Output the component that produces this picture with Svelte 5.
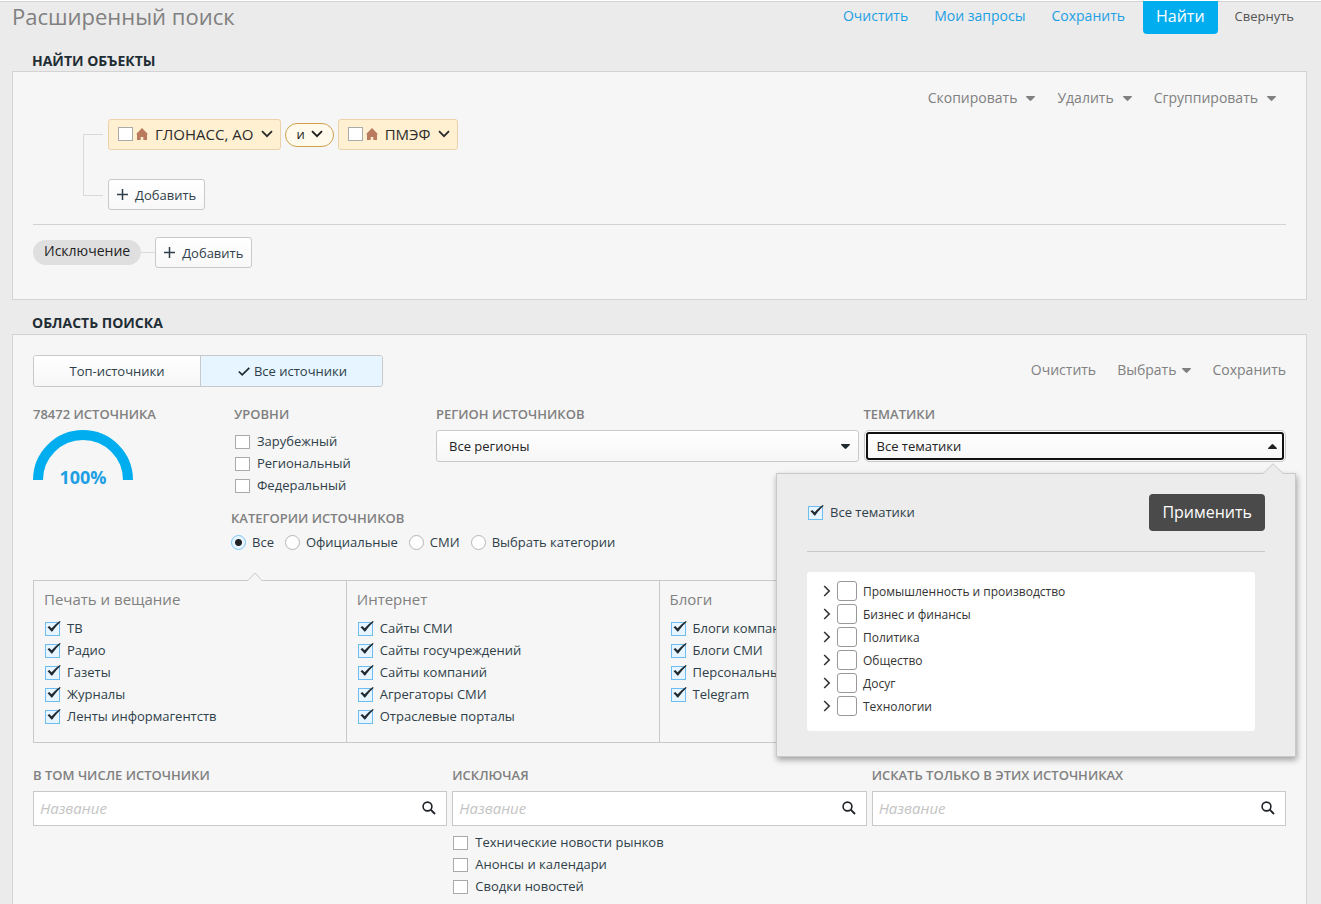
<script>
  const levels = ['Зарубежный', 'Региональный', 'Федеральный'];
  const categories = ['Все', 'Официальные', 'СМИ', 'Выбрать категории'];
  const groups = [
    { title: 'Печать и вещание', items: ['ТВ', 'Радио', 'Газеты', 'Журналы', 'Ленты информагентств'] },
    { title: 'Интернет', items: ['Сайты СМИ', 'Сайты госучреждений', 'Сайты компаний', 'Агрегаторы СМИ', 'Отраслевые порталы'] },
    { title: 'Блоги', items: ['Блоги компаний', 'Блоги СМИ', 'Персональные блоги', 'Telegram'] }
  ];
  const topics = ['Промышленность и производство', 'Бизнес и финансы', 'Политика', 'Общество', 'Досуг', 'Технологии'];
  const sourceFields = [
    { id: 'include', title: 'В том числе источники', options: [] },
    { id: 'exclude', title: 'Исключая', options: ['Технические новости рынков', 'Анонсы и календари', 'Сводки новостей'] },
    { id: 'only', title: 'Искать только в этих источниках', options: [] }
  ];

  let category = $state('Все');
  let topicsOpen = $state(true);
</script>

{#snippet caret()}
  <svg class="caret" width="9" height="5" viewBox="0 0 9 5" aria-hidden="true"><path d="M.6 0h7.800q.9.200.4.900L5.300 4.600q-.8.700-1.600 0L.2.900Q-.3.200.6 0z" fill="currentColor" /></svg>
{/snippet}

{#snippet chevron()}
  <svg class="chevron" width="12" height="8" viewBox="0 0 12 8" aria-hidden="true"><path d="M1 1.200l5 5 5-5" fill="none" stroke="currentColor" stroke-width="1.800" /></svg>
{/snippet}

{#snippet plus()}
  <svg width="11" height="11" viewBox="0 0 11 11" aria-hidden="true"><path d="M5.500 0v11M0 5.500h11" stroke="currentColor" stroke-width="1.500" /></svg>
{/snippet}

{#snippet checkItem(text, checked)}
  <label class="check">
    <span class="box">
      <input type="checkbox" {checked} />
      <svg class="tick" width="14" height="12" viewBox="0 0 14 12" aria-hidden="true"><path d="M.5 6.200l1.800-1.300 2.300 2.400Q8.500 2.800 12.800 0l.9.700Q9 5 5.200 10.500H4.300Q2.600 8 .5 6.200z" fill="#222a30" /></svg>
    </span>
    <span>{text}</span>
  </label>
{/snippet}

{#snippet chip(text)}
  <div class="chip">
    <input type="checkbox" aria-label={text} />
    <svg width="12" height="12" viewBox="0 0 12 12" aria-hidden="true"><path d="M6 0l6 6.200h-1V12H7.300V9H4.700v3H1V6.200H0z" fill="#b97a5e" /></svg>
    <button type="button">{text}{@render chevron()}</button>
  </div>
{/snippet}

<main class="page">
  <header class="header">
    <h1>Расширенный поиск</h1>
    <nav class="actions">
      <a href="#clear">Очистить</a>
      <a href="#queries">Мои запросы</a>
      <a href="#save">Сохранить</a>
      <button class="find" type="button">Найти</button>
      <button class="collapse" type="button">Свернуть</button>
    </nav>
  </header>

  <h2>Найти объекты</h2>
  <section class="panel objects">
    <div class="toolbar">
      <button type="button">Скопировать{@render caret()}</button>
      <button type="button">Удалить{@render caret()}</button>
      <button type="button">Сгруппировать{@render caret()}</button>
    </div>
    <div class="tree">
      <div class="bracket"></div>
      <div class="branches">
        <div class="chips">
          {@render chip('ГЛОНАСС, АО')}
          <button class="operator" type="button">и{@render chevron()}</button>
          {@render chip('ПМЭФ')}
        </div>
        <button class="add" type="button">{@render plus()}Добавить</button>
      </div>
    </div>
    <div class="exclusion">
      <span class="tag">Исключение</span>
      <span class="link"></span>
      <button class="add" type="button">{@render plus()}Добавить</button>
    </div>
  </section>

  <h2 class="second">Область поиска</h2>
  <section class="panel scope">
    <div class="scope-head">
      <div class="toggle">
        <button type="button">Топ-источники</button>
        <button type="button" class="active">
          <svg width="12" height="9" viewBox="0 0 12 9" aria-hidden="true"><path d="M.8 4.500l3.400 3.300L11.300.8" fill="none" stroke="#1f2a30" stroke-width="1.700" /></svg>Все источники
        </button>
      </div>
      <div class="toolbar compact">
        <button type="button">Очистить</button>
        <button type="button">Выбрать{@render caret()}</button>
        <button type="button">Сохранить</button>
      </div>
    </div>

    <div class="filters">
      <div>
        <h3>78472 источника</h3>
        <svg class="gauge" width="100" height="64" viewBox="0 0 100 64" role="img" aria-label="100%">
          <path d="M5 50a45 45 0 0 1 90 0" fill="none" stroke="#00adef" stroke-width="10" />
          <text x="50" y="54" text-anchor="middle">100%</text>
        </svg>
      </div>
      <div>
        <h3>Уровни</h3>
        <div class="levels">
          {#each levels as level}{@render checkItem(level, false)}{/each}
        </div>
      </div>
      <div class="field">
        <h3><label for="region">Регион источников</label></h3>
        <div class="select">
          <select id="region"><option>Все регионы</option></select>
          {@render caret()}
        </div>
      </div>
      <div class="field">
        <h3 id="topics-title">Тематики</h3>
        <button class="topics" type="button" aria-haspopup="dialog" aria-expanded={topicsOpen} onclick={() => (topicsOpen = !topicsOpen)}>
          Все тематики{@render caret()}
        </button>
        {#if topicsOpen}
          <div class="popover" role="dialog" aria-labelledby="topics-title">
            <svg class="pointer" width="20" height="11" viewBox="0 0 20 11" aria-hidden="true"><path d="M0 10.500L10 .7l10 9.800V11H0z" fill="#ececec" /><path d="M0 10.500L10 .7l10 9.800" fill="none" stroke="#c9c9c9" /></svg>
            <div class="popover-head">
              {@render checkItem('Все тематики', true)}
              <button class="apply" type="button">Применить</button>
            </div>
            <ul>
              {#each topics as topic}
                <li>
                  <button type="button" aria-label="Развернуть: {topic}">
                    <svg width="8" height="12" viewBox="0 0 8 12" aria-hidden="true"><path d="M1.200 1l5 5-5 5" fill="none" stroke="#333" stroke-width="1.600" /></svg>
                  </button>
                  <label><input type="checkbox" />{topic}</label>
                </li>
              {/each}
            </ul>
          </div>
        {/if}
      </div>
    </div>

    <div class="categories">
      <h3 id="cat-title">Категории источников</h3>
      <div class="radios" role="radiogroup" aria-labelledby="cat-title">
        {#each categories as name}
          <label><input type="radio" name="category" value={name} bind:group={category} />{name}</label>
        {/each}
      </div>
    </div>

    <div class="groups">
      <svg class="notch" width="16" height="9" viewBox="0 0 16 9" aria-hidden="true"><path d="M1 8.500l7-7.500 7 7.500V9H1z" fill="#f6f6f6" /><path d="M1 8.500l7-7.500 7 7.500" fill="none" stroke="#c9c9c9" /></svg>
      {#each groups as group}
        <div class="group">
          <h4>{group.title}</h4>
          {#each group.items as item}{@render checkItem(item, true)}{/each}
        </div>
      {/each}
    </div>

    <div class="sources">
      {#each sourceFields as field}
        <div>
          <h3><label for={field.id}>{field.title}</label></h3>
          <div class="search">
            <input id={field.id} type="text" placeholder="Название" />
            <button type="button" aria-label="Найти">
              <svg width="14" height="14" viewBox="0 0 14 14" aria-hidden="true"><circle cx="5.500" cy="5.500" r="4.400" fill="none" stroke="#1f2228" stroke-width="1.600" /><path d="M8.700 8.700l4.300 4.300" stroke="#1f2228" stroke-width="1.900" /></svg>
            </button>
          </div>
          {#each field.options as option}{@render checkItem(option, false)}{/each}
        </div>
      {/each}
    </div>
  </section>
</main>

<style>
  :global(body) {
    margin: 0;
    background: #ebebeb;
  }
  .page {
    box-sizing: border-box;
    height: 100vh;
    overflow: hidden;
    border-top: 1px solid #fff;
    font-family: 'Open Sans', 'Noto Sans', sans-serif;
    font-size: 13px;
    color: #2f3f4a;
  }
  .page :global(*) {
    box-sizing: border-box;
  }
  button,
  input,
  select {
    margin: 0;
    font: inherit;
    color: inherit;
  }
  button {
    display: flex;
    align-items: center;
    justify-content: center;
    padding: 0;
    border: 0;
    background: none;
    white-space: nowrap;
    cursor: pointer;
  }
  svg {
    flex: none;
  }
  h1,
  h2,
  h3,
  h4 {
    margin: 0;
  }

  .header {
    display: flex;
    justify-content: space-between;
    height: 49px;
    padding: 0 27px 0 12px;
    border-top: 1px solid #d3d3d3;
  }
  h1 {
    font-size: 22px;
    font-weight: 400;
    line-height: 28px;
    color: #808080;
  }
  .actions {
    display: flex;
    align-items: flex-start;
  }
  .actions a {
    margin-right: 26px;
    font-size: 14px;
    line-height: 28px;
    color: #1d9fe3;
    text-decoration: none;
  }
  .actions a:nth-of-type(3) {
    margin-right: 18px;
  }
  .find {
    height: 33px;
    margin-top: -1px;
    padding: 0 13px 3px;
    border-radius: 0 0 4px 4px;
    background: #00adef;
    font-size: 16px;
    font-weight: 500;
    color: #fff;
  }
  .collapse {
    margin-left: 17px;
    line-height: 28px;
    color: #555;
  }

  h2 {
    padding-left: 32px;
    font-size: 14px;
    font-weight: 700;
    line-height: 21px;
    text-transform: uppercase;
    color: #1f2d35;
  }
  .second {
    margin-top: 12px;
    padding-bottom: 1px;
  }
  .panel {
    margin: 0 14px 0 12px;
    border: 1px solid #d3d3d3;
    background: #f6f6f6;
  }
  .toolbar {
    display: flex;
    justify-content: flex-end;
    gap: 22px;
    padding-right: 10px;
    font-size: 14px;
    line-height: 20px;
    color: #808080;
  }
  .toolbar .caret {
    margin-left: 9px;
  }

  .objects {
    padding: 16px 20px 31px;
  }
  .tree {
    display: flex;
    padding: 11px 0 14px 50px;
    border-bottom: 1px solid #d3d3d3;
  }
  .bracket {
    width: 20px;
    margin: 15px 5px 14px 0;
    border: 1px solid #d9d9d9;
    border-right: 0;
  }
  .branches {
    display: flex;
    flex-direction: column;
    align-items: flex-start;
    gap: 29px;
  }
  .chips {
    display: flex;
    align-items: center;
    gap: 4px;
  }
  .chip {
    display: flex;
    align-items: center;
    gap: 3px;
    height: 31px;
    padding: 0 7px 1px 9px;
    border: 1px solid #ecd2a8;
    border-radius: 3px;
    background: #fff0d2;
    color: #2b2b2b;
  }
  .chip button {
    gap: 8px;
    padding-left: 4px;
    font-size: 15px;
  }
  .operator {
    gap: 6px;
    height: 24px;
    padding: 0 10px 1px;
    border: 1px solid #cfa24a;
    border-radius: 12px;
    background: #fffaeb;
    color: #1c1c1c;
  }
  .add {
    gap: 7px;
    height: 31px;
    padding: 0 8px;
    border: 1px solid #c9c9c9;
    border-radius: 3px;
    background: linear-gradient(#fff, #f8f8f8);
  }
  .exclusion {
    display: flex;
    align-items: center;
    padding-top: 12px;
  }
  .tag {
    padding: 0 11px 3px;
    border-radius: 13px;
    background: #dfdfdf;
    font-size: 14px;
    line-height: 22px;
    color: #222;
  }
  .link {
    width: 14px;
    height: 1px;
    background: #d9d9d9;
  }

  .scope {
    padding: 20px 20px 60px;
  }
  .scope-head {
    display: flex;
    justify-content: space-between;
    align-items: center;
  }
  .compact {
    gap: 21px;
    padding: 0 0 2px;
  }
  .compact .caret {
    margin-left: 6px;
  }
  .toggle {
    display: flex;
    height: 32px;
    border: 1px solid #c9c9c9;
    border-radius: 3px;
    overflow: hidden;
  }
  .toggle button {
    width: 166px;
    background: linear-gradient(#fff, #f6f6f6);
  }
  .toggle .active {
    gap: 4px;
    width: 182px;
    padding-left: 2px;
    border-left: 1px solid #c9c9c9;
    background: #e6f5ff;
  }
  .filters {
    display: grid;
    grid-template-columns: 196px 197px minmax(0, 1fr) minmax(0, 1fr);
    column-gap: 5px;
    padding-top: 17px;
  }
  h3 {
    margin-bottom: 6px;
    font-size: 13px;
    font-weight: 600;
    line-height: 20px;
    text-transform: uppercase;
    color: #808080;
  }
  .gauge {
    display: block;
  }
  .gauge text {
    font-size: 18px;
    font-weight: 700;
    fill: #1d9fe3;
  }
  .levels {
    padding-left: 1px;
  }
  .field {
    position: relative;
  }
  .select {
    display: grid;
    align-items: center;
  }
  .select > select,
  .select > :global(.caret) {
    grid-area: 1 / 1;
  }
  .select > :global(.caret) {
    justify-self: end;
    margin-right: 9px;
    pointer-events: none;
    color: #1f2a30;
  }
  select,
  .topics {
    width: 100%;
    height: 32px;
    padding: 0 12px;
    border: 1px solid #c9c9c9;
    border-radius: 3px;
    background: linear-gradient(#fff, #f6f6f6);
    color: #222;
    appearance: none;
  }
  .topics {
    justify-content: space-between;
    padding-right: 8px;
  }
  .topics[aria-expanded='true'] {
    border-radius: 5px;
    outline: 2px solid #111;
    outline-offset: -4px;
  }
  .topics[aria-expanded='true'] > :global(.caret) {
    transform: rotate(180deg);
  }

  .popover {
    position: absolute;
    z-index: 2;
    top: 69px;
    right: -10px;
    width: 520px;
    padding: 20px 30px 25px;
    border: 1px solid #c9c9c9;
    background: #ececec;
    box-shadow: 1px 3px 6px rgba(0, 0, 0, 0.35);
  }
  .pointer {
    position: absolute;
    top: -11px;
    right: 12px;
  }
  .popover-head {
    display: flex;
    align-items: flex-start;
    justify-content: space-between;
    padding-bottom: 20px;
    border-bottom: 1px solid #c9c9c9;
  }
  .popover-head > :global(.check) {
    margin: 7px 0 0 1px;
  }
  .apply {
    height: 37px;
    padding: 0 13px 2px;
    border-radius: 4px;
    background: #4a4a4a;
    font-size: 16px;
    font-weight: 500;
    color: #fff;
  }
  ul {
    margin: 20px 10px 0 0;
    padding: 8px 16px 13px;
    border-radius: 3px;
    background: #fff;
    list-style: none;
  }
  li {
    display: flex;
    align-items: center;
    gap: 6px;
    height: 23px;
  }
  li label {
    display: flex;
    align-items: center;
    gap: 6px;
    font-size: 12px;
    color: #333;
  }
  li button,
  li input {
    margin-bottom: 2px;
  }
  li input {
    appearance: none;
    width: 20px;
    height: 20px;
    border: 1px solid #999;
    border-radius: 3px;
    background: #fff;
  }

  .check {
    display: flex;
    align-items: center;
    gap: 7px;
    height: 22px;
    white-space: nowrap;
  }
  .box {
    position: relative;
    display: flex;
    margin-top: 2px;
  }
  .box input,
  .chip input {
    appearance: none;
    width: 15px;
    height: 14px;
    border: 1px solid #aaa;
    background: #fff;
  }
  .box input:checked {
    border-color: #6fbdf0;
    background: #e6f5ff;
  }
  .tick {
    position: absolute;
    top: -1px;
    left: 2px;
    visibility: hidden;
    pointer-events: none;
  }
  input:checked + .tick {
    visibility: visible;
  }

  .categories {
    padding-left: 198px;
  }
  .categories h3 {
    margin: 12px 0 3px;
  }
  .radios {
    display: flex;
    gap: 11px;
  }
  .radios label {
    display: flex;
    align-items: center;
    gap: 6px;
    height: 22px;
  }
  .radios input {
    appearance: none;
    width: 15px;
    height: 15px;
    border: 1px solid #b5b5b5;
    border-radius: 50%;
    background: #fff;
  }
  .radios input:checked {
    border-color: #7cc4f2;
    background: radial-gradient(circle, #222 3px, #e6f5ff 4px);
  }

  .groups {
    position: relative;
    display: grid;
    grid-template-columns: repeat(4, 1fr);
    margin-top: 27px;
    border: 1px solid #c9c9c9;
  }
  .notch {
    position: absolute;
    top: -9px;
    left: 213px;
  }
  .group {
    padding: 8px 10px 15px 11px;
    border-right: 1px solid #c9c9c9;
  }
  h4 {
    margin-bottom: 8px;
    font-size: 15px;
    font-weight: 400;
    line-height: 20px;
    color: #808080;
  }
  .group h4 {
    margin-left: -1px;
  }

  .sources {
    display: grid;
    grid-template-columns: repeat(3, minmax(0, 1fr));
    gap: 5px;
    padding-top: 22px;
  }
  .sources :global(.check) {
    padding-left: 1px;
  }
  .search {
    display: flex;
    height: 35px;
    margin-bottom: 5px;
    padding-bottom: 2px;
    border: 1px solid #c9c9c9;
    background: #fff;
  }
  .search input {
    flex: 1;
    min-width: 0;
    padding: 0 6px;
    border: 0;
    background: none;
    font-size: 15px;
  }
  .search input::placeholder {
    font-style: italic;
    color: #c4c4c4;
    opacity: 1;
  }
  .search button {
    padding: 0 10px;
  }
</style>
